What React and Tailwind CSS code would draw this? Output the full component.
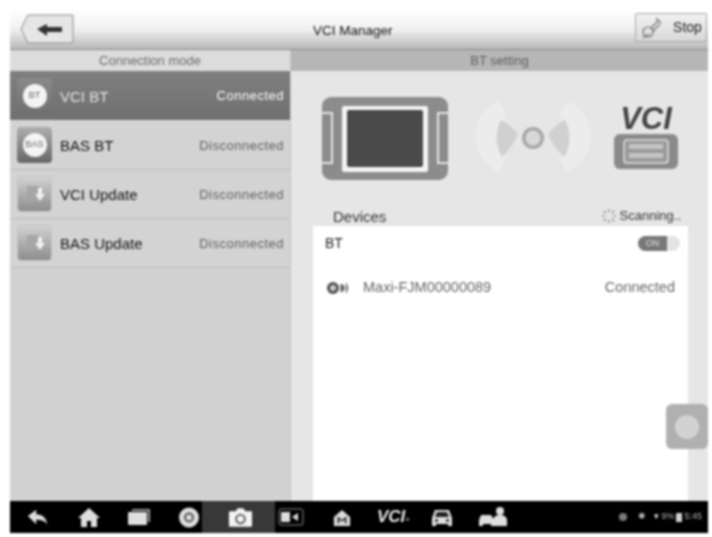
import React from "react";

const font = { fontFamily: '"Liberation Sans", Arial, sans-serif' };

function BtBadge({ label, dark }) {
  return (
    <div className={`w-[35px] h-[36px] rounded-[4px] flex items-center justify-center shrink-0 bg-gradient-to-b ${dark ? "from-[#8a8a8a] to-[#6e6e6e]" : "from-[#b0b0b0] to-[#666666]"}`}>
      <div className="w-[24px] h-[24px] rounded-full bg-[#f4f4f4] flex items-center justify-center text-[9px] text-[#666666]">{label}</div>
    </div>
  );
}

function UpdateBadge() {
  return (
    <div className="w-[35px] h-[36px] rounded-[4px] flex items-center justify-center shrink-0 bg-gradient-to-b from-[#d2d2d2] to-[#8d8d8d] border border-[#c4c4c4]">
      <svg width="22" height="22" viewBox="0 0 22 22">
        <rect x="3" y="3" width="12" height="15" fill="#a6a6a6" />
        <path d="M14 5h4v6h3l-5 7-5-7h3z" fill="#f2f2f2" />
      </svg>
    </div>
  );
}

function Row({ icon, name, status, active }) {
  return (
    <div className={`flex items-center pl-[7px] pr-[6px] border-b ${active ? "h-[50px] bg-gradient-to-b from-[#7f7f7f] to-[#707070] border-[#e0e0e0]" : "h-[49px] bg-[#d3d3d3] border-[#bdbdbd]"}`}>
      {icon}
      <span className={`ml-[8px] mt-[3px] text-[15px] ${active ? "text-[#e4e4e4]" : "text-[#111111]"}`}>{name}</span>
      <span className={`ml-auto mt-[1px] text-[13px] tracking-[0.5px] ${active ? "text-white" : "text-[#606060]"}`}>{status}</span>
    </div>
  );
}

function Tablet() {
  return (
    <svg width="126" height="83" viewBox="0 0 126 83">
      <rect x="0" y="0" width="126" height="83" rx="9" fill="#8c8c8c" />
      <rect x="0" y="15" width="11" height="52" fill="#e6e6e6" />
      <rect x="0" y="17" width="9" height="48" fill="#8c8c8c" />
      <rect x="115" y="15" width="11" height="52" fill="#e6e6e6" />
      <rect x="117" y="17" width="9" height="48" fill="#8c8c8c" />
      <rect x="20" y="9" width="86" height="66" fill="#f4f4f4" rx="2" />
      <rect x="25" y="13" width="76" height="57" fill="#4a4a4a" rx="2" />
    </svg>
  );
}

function Signal() {
  return (
    <svg width="120" height="73" viewBox="0 0 120 73">
      <path d="M26 1C-6 14 -6 58 26 72L34 58C22 46 22 28 34 14Z" fill="#ececec" />
      <path d="M94 1C126 14 126 58 94 72L86 58C98 46 98 28 86 14Z" fill="#ececec" />
      <path d="M28 20C36 24 42 30 45 34C42 42 36 50 29 57C22 46 22 30 28 20Z" fill="#d0d0d0" />
      <path d="M92 20C84 24 78 30 75 34C78 42 84 50 91 57C98 46 98 30 92 20Z" fill="#d0d0d0" />
      <circle cx="60" cy="38" r="11" fill="#a8a8a8" />
      <circle cx="60" cy="38" r="7.5" fill="#d8d8d8" />
    </svg>
  );
}

function VciBox() {
  return (
    <div className="flex flex-col items-center w-[66px]">
      <span className="text-[31px] leading-[27px] font-bold italic text-[#444444]">VCI</span>
      <svg width="66" height="37" viewBox="0 0 66 37" className="mt-[1px]">
        <rect x="1" y="1" width="64" height="35" rx="6" fill="#8a8a8a" />
        <rect x="11" y="7" width="44" height="23" rx="3" fill="#9a9a9a" stroke="#e0e0e0" strokeWidth="1.5" />
        <rect x="16" y="11" width="34" height="5" fill="#c4c4c4" />
        <rect x="16" y="20" width="34" height="5" fill="#c4c4c4" />
      </svg>
    </div>
  );
}

function Spinner() {
  return (
    <svg width="16" height="16" viewBox="0 0 16 16" stroke="#808080" strokeWidth="1.2">
      <path d="M8 1v3M8 12v3M1 8h3M12 8h3M3 3l2 2M11 11l2 2M13 3l-2 2M5 11l-2 2" />
    </svg>
  );
}

function NavIcons() {
  const c = "#dedede";
  return (
    <div className="h-[32px] bg-black flex items-center relative">
      <div className="absolute left-[192px] top-0 h-full w-[73px] bg-[#383838]" />
      <div className="relative flex items-center w-full h-full">
        <svg className="absolute left-[17px] top-[7px]" width="22" height="18" viewBox="0 0 24 18"><path d="M1 8L10 1v5c7 0 11 4 12 11-3-4-6-5-12-5v5z" fill={c} /></svg>
        <svg className="absolute left-[67px] top-[6px]" width="24" height="21" viewBox="0 0 24 21"><path d="M12 1L1 11h3v9h6v-6h4v6h6v-9h3z" fill={c} /></svg>
        <svg className="absolute left-[117px] top-[7px]" width="24" height="18" viewBox="0 0 24 18"><path d="M5 1h18v13h-2V3H5z" fill="#9a9a9a" /><rect x="1" y="4" width="19" height="13" rx="1" fill={c} /></svg>
        <svg className="absolute left-[168px] top-[6px]" width="22" height="21" viewBox="0 0 22 21"><circle cx="11" cy="10.5" r="10" fill={c} /><circle cx="11" cy="10.5" r="5" fill="#555555" /><circle cx="11" cy="10.5" r="3" fill={c} /></svg>
        <svg className="absolute left-[218px] top-[6px]" width="25" height="21" viewBox="0 0 26 21"><path d="M2 4h6l2-3h6l2 3h6a1 1 0 011 1v14a1 1 0 01-1 1H2a1 1 0 01-1-1V5a1 1 0 011-1z" fill="#f4f4f4" /><circle cx="13" cy="12" r="5.5" fill="#5a5a5a" /><circle cx="13" cy="12" r="3.5" fill="#f4f4f4" /></svg>
        <svg className="absolute left-[268px] top-[7px]" width="26" height="18" viewBox="0 0 26 18"><rect x="1" y="1" width="24" height="16" rx="2" fill="none" stroke="#8a8a8a" /><rect x="3" y="4" width="9" height="10" fill={c} /><path d="M14 9l6-4v8z" fill={c} /></svg>
        <svg className="absolute left-[323px] top-[7px]" width="18" height="20" viewBox="0 0 20 20"><path d="M10 1L1 9v10h18V9z" fill={c} /><path d="M5 16V8l5 4 5-4v8h-2v-4l-3 2-3-2v4z" fill="#333333" /></svg>
        <span className="absolute left-[367px] top-[6px] text-[17px] leading-[20px] font-bold italic text-[#e8e8e8]">VCI<span className="text-[8px] font-normal">+</span></span>
        <svg className="absolute left-[420px] top-[7px]" width="24" height="20" viewBox="0 0 24 20"><path d="M5 2h14l3 8v8h-4v-2H6v2H2v-8z" fill={c} /><path d="M7 4h10l2 5H5z" fill="#222222" /><circle cx="6.5" cy="12.5" r="1.5" fill="#222222" /><circle cx="17.5" cy="12.5" r="1.5" fill="#222222" /></svg>
        <svg className="absolute left-[468px] top-[5px]" width="30" height="22" viewBox="0 0 30 22"><path d="M3 9h10l3 5v6h-3v-2H5v2H1v-6z" fill={c} /><circle cx="22" cy="5" r="4" fill={c} /><path d="M15 20v-6c0-3 3-5 7-5s7 2 7 5v6z" fill={c} /></svg>
        <div className="absolute right-[6px] top-0 h-full flex items-center text-[9px] text-[#b0b0b0]">
          <span className="w-[8px] h-[8px] rounded-full bg-[#7a7a7a]" />
          <span className="ml-[11px] text-[#c0c0c0]">✱</span>
          <span className="ml-[8px] text-[#e0e0e0]">▾</span>
          <span className="ml-[2px]">9%</span>
          <span className="mx-[2px] w-[6px] h-[9px] bg-[#d0d0d0]" />
          <span>5:45</span>
        </div>
      </div>
    </div>
  );
}

export default function App() {
  return (
    <div style={font} className="w-[712px] h-[537px] bg-white pl-[10px] pr-[4px] pt-[10px] pb-[4px] overflow-hidden blur-[0.8px]">
      <div className="w-full h-full flex flex-col relative">
        <header className="h-[40px] shrink-0 bg-gradient-to-b from-white via-[#f0f0f0] to-[#b8b8b8] border-b border-[#8c8c8c] flex items-center relative pr-[1px]">
          <svg width="54" height="30" viewBox="0 0 54 30" className="ml-[10px] mt-[-2px]">
            <path d="M8 1H52a1 1 0 011 1V28a1 1 0 01-1 1H8L1 15z" fill="#e6e6e6" stroke="#8a8a8a" />
            <path d="M17 15L27 10v3h15v5H27v4z" fill="#333333" />
          </svg>
          <span className="ml-[239px] mt-[3px] text-[13.5px] text-[#111111]">VCI Manager</span>
          <div className="ml-auto w-[72px] h-[29px] mt-[-4px] border border-[#a6a6a6] rounded-[2px] bg-gradient-to-b from-[#f2f2f2] to-[#d8d8d8] flex items-center justify-center gap-[9px]">
            <svg width="24" height="24" viewBox="0 0 24 24" fill="none" stroke="#6e6e6e" strokeWidth="1.2"><circle cx="8" cy="16" r="5" /><path d="M11 12l7-7M13 15l7-7M16 2l5 5M3 22l6-4" /></svg>
            <span className="text-[14px] text-[#222222]">Stop</span>
          </div>
        </header>
        <div className="flex-1 flex min-h-0">
          <aside className="w-[281px] shrink-0 bg-[#d2d2d2] flex flex-col border-r border-[#c4c4c4]">
            <div className="h-[21px] bg-[#dcdcdc] text-center text-[13px] leading-[21px] text-[#6c6c6c]">Connection mode</div>
            <Row active icon={<BtBadge dark label="BT" />} name="VCI BT" status="Connected" />
            <Row icon={<BtBadge label="BAS" />} name="BAS BT" status="Disconnected" />
            <Row icon={<UpdateBadge />} name="VCI Update" status="Disconnected" />
            <Row icon={<UpdateBadge />} name="BAS Update" status="Disconnected" />
          </aside>
          <main className="flex-1 bg-[#e6e6e6] flex flex-col min-w-0 relative">
            <div className="h-[21px] bg-[#b6b6b6] text-center text-[13px] leading-[21px] text-[#606060]">BT setting</div>
            <div className="flex items-start h-[155px] pl-[31px] pt-[26px]">
              <Tablet />
              <div className="ml-[25px] mt-[3px]"><Signal /></div>
              <div className="ml-[20px] mt-[8px]"><VciBox /></div>
            </div>
            <div className="ml-[22px] w-[375px] flex-1 flex flex-col">
              <div className="h-0 relative">
                <span className="absolute left-[20px] top-[-20px] text-[15px] text-[#333333]">Devices</span>
                <div className="absolute right-[7px] top-[-20px] flex items-center gap-[3px] text-[13px] text-[#333333]"><Spinner />Scanning..</div>
              </div>
              <div className="flex-1 bg-white">
                <div className="h-[41px] flex items-center pl-[12px] pr-[8px] text-[14px] text-[#222222] -translate-y-[3px]">
                  <span>BT</span>
                  <div className="ml-auto w-[42px] h-[15px] rounded-full bg-[#e4e4e4] flex">
                    <div className="w-[29px] h-full rounded-l-full rounded-r-[3px] bg-[#777777] text-[9px] leading-[15px] text-center text-[#e0e0e0]">ON</div>
                  </div>
                </div>
                <div className="h-[42px] flex items-center pl-[13px] pr-[13px] text-[14px] text-[#666666]">
                  <svg width="24" height="14" viewBox="0 0 24 14"><circle cx="7" cy="7" r="6" fill="#505050" /><circle cx="7" cy="7" r="3" fill="#c8c8c8" /><path d="M15 3v8l3-2V5zM20 2c2 3 2 7 0 10" fill="#606060" stroke="#606060" /></svg>
                  <span className="ml-[13px] text-[14.5px]">Maxi-FJM00000089</span>
                  <span className="ml-auto text-[14.5px]">Connected</span>
                </div>
              </div>
            </div>
            <div className="absolute right-0 top-[354px] w-[42px] h-[45px] rounded-[6px] bg-[#b0b0b0] flex items-center justify-center">
              <div className="w-[24px] h-[24px] rounded-full bg-[#d2d2d2]" />
            </div>
          </main>
        </div>
        <NavIcons />
      </div>
    </div>
  );
}
